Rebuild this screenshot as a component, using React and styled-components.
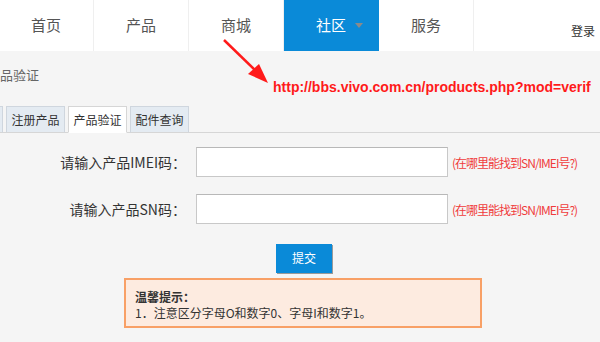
import React from 'react';
import styled, { createGlobalStyle } from 'styled-components';

const GlobalStyle = createGlobalStyle`
  html, body {
    margin: 0;
    padding: 0;
    background: #f5f5f5;
    font-family: "Noto Sans CJK SC", "Noto Sans", sans-serif;
  }
  * { box-sizing: border-box; }
`;

const Page = styled.div`
  position: relative;
  width: 600px;
  height: 342px;
  overflow: hidden;
  background: #f5f5f5;
`;

const NavBar = styled.header`
  display: flex;
  align-items: stretch;
  height: 51px;
  background: #ffffff;
`;

const NavList = styled.nav`
  display: flex;
  margin-left: -1px;
`;

const NavItem = styled.a`
  position: relative;
  display: flex;
  align-items: center;
  justify-content: center;
  width: 95px;
  padding-bottom: 2px;
  font-size: 15px;
  color: ${(p) => (p.$active ? '#ffffff' : '#555555')};
  background: ${(p) => (p.$active ? '#0a8ad8' : 'transparent')};
  border-right: 1px solid ${(p) => (p.$active ? '#0a8ad8' : '#efefef')};
`;

const Caret = styled.span`
  position: absolute;
  left: 71px;
  top: 23px;
  width: 0;
  height: 0;
  border-left: 4px solid transparent;
  border-right: 4px solid transparent;
  border-top: 5px solid #8a8a8a;
`;

const Login = styled.a`
  margin-left: auto;
  margin-right: 5px;
  padding-top: 22px;
  font-size: 12px;
  color: #333333;
`;

const Crumb = styled.div`
  height: 55px;
  padding-top: 14px;
  font-size: 13px;
  color: #666666;
`;

const Tabs = styled.div`
  display: flex;
  gap: 3px;
  height: 27px;
  border-bottom: 1px solid #d6d6d6;
`;

const Tab = styled.div`
  display: flex;
  align-items: center;
  justify-content: center;
  width: ${(p) => p.$w || 59}px;
  height: 27px;
  margin-left: ${(p) => p.$ml || 0}px;
  font-size: 12px;
  color: #333333;
  background: ${(p) => (p.$active ? '#ffffff' : '#e4ebf2')};
  border: 1px solid ${(p) => (p.$active ? '#d6d6d6' : '#cfd6de')};
  border-bottom: 1px solid ${(p) => (p.$active ? '#ffffff' : '#d6d6d6')};
`;

const Form = styled.div`
  display: grid;
  grid-template-columns: 186px 252px auto;
  column-gap: 10px;
  row-gap: 17px;
  align-items: center;
  padding-top: 14px;
`;

const Label = styled.label`
  text-align: right;
  font-size: 14px;
  color: #333333;
`;

const Input = styled.input`
  width: 252px;
  height: 30px;
  margin: 0;
  background: #ffffff;
  border: 1px solid #c8c8c8;
  border-top-color: #b8b8b8;
  outline: none;
`;

const Hint = styled.a`
  margin-left: -6px;
  font-size: 12px;
  letter-spacing: -1px;
  color: #f03c3c;
  white-space: nowrap;
`;

const Submit = styled.button`
  display: block;
  width: 56px;
  height: 29px;
  margin: 20px 0 0 276px;
  padding: 0 0 2px;
  font-family: inherit;
  font-size: 12px;
  color: #ffffff;
  background: #0a8ad8;
  border: none;
  box-shadow: 1px 1px 0 #9a9a9a;
`;

const Notice = styled.div`
  width: 358px;
  height: 50px;
  margin: 5px 0 0 124px;
  padding: 9px 0 0 9px;
  background: #fdebe0;
  border: 2px solid #f8a066;
  font-size: 12px;
  line-height: 16px;
  color: #333333;
`;

const NoticeTitle = styled.div`
  font-weight: bold;
`;

const Annotation = styled.div`
  position: absolute;
  left: 273px;
  top: 79px;
  font-family: "Liberation Sans", Arial, sans-serif;
  font-weight: bold;
  font-size: 14px;
  color: #ff1a1a;
  white-space: nowrap;
`;

const Arrow = styled.svg`
  position: absolute;
  left: 0;
  top: 0;
  pointer-events: none;
`;

export default function App() {
  return (
    <Page>
      <GlobalStyle />
      <NavBar>
        <NavList>
          <NavItem>首页</NavItem>
          <NavItem>产品</NavItem>
          <NavItem>商城</NavItem>
          <NavItem $active>
            社区
            <Caret />
          </NavItem>
          <NavItem>服务</NavItem>
        </NavList>
        <Login>登录</Login>
      </NavBar>
      <Crumb>品验证</Crumb>
      <Tabs>
        <Tab $w={4} $ml={-1} />
        <Tab>注册产品</Tab>
        <Tab $active>产品验证</Tab>
        <Tab>配件查询</Tab>
      </Tabs>
      <Form>
        <Label>请输入产品IMEI码：</Label>
        <Input />
        <Hint>(在哪里能找到SN/IMEI号?)</Hint>
        <Label>请输入产品SN码：</Label>
        <Input />
        <Hint>(在哪里能找到SN/IMEI号?)</Hint>
      </Form>
      <Submit>提交</Submit>
      <Notice>
        <NoticeTitle>温馨提示：</NoticeTitle>
        <div>1．注意区分字母O和数字0、字母I和数字1。</div>
      </Notice>
      <Annotation>http://bbs.vivo.com.cn/products.php?mod=verif</Annotation>
      <Arrow width="600" height="342" viewBox="0 0 600 342">
        <line x1="224" y1="40" x2="258" y2="73" stroke="#ff1a1a" strokeWidth="2.5" />
        <polygon points="268,83 248,74 259,64" fill="#ff1a1a" />
      </Arrow>
    </Page>
  );
}
